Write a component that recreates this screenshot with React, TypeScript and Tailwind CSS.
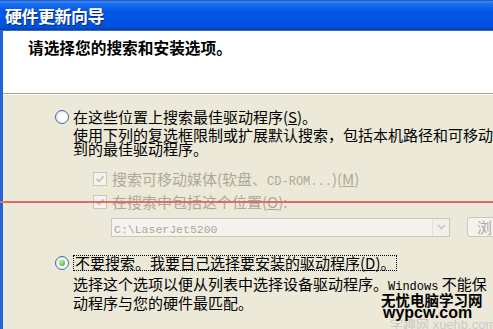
const CJK = '"Noto Sans CJK SC", "Liberation Sans", sans-serif';

function Lat({ children, size = 12 }: { children: React.ReactNode; size?: number }) {
  return (
    <span style={{ fontSize: size }} className="font-['Liberation_Mono',monospace]">
      {children}
    </span>
  );
}

function Radio({ checked }: { checked?: boolean }) {
  return (
    <span className="w-[14px] h-[14px] rounded-full border border-[#3e6aa5] bg-[radial-gradient(circle_at_60%_60%,#ffffff_30%,#dcdcd4_100%)] flex items-center justify-center shrink-0">
      {checked ? (
        <span className="w-[6px] h-[6px] rounded-full bg-[radial-gradient(circle_at_35%_35%,#b7f2a0,#31a628)]" />
      ) : null}
    </span>
  );
}

function Checkbox() {
  return (
    <span className="w-[14px] h-[14px] border border-[#c9c7ba] bg-[#f4f3ee] flex items-center justify-center shrink-0">
      <svg width="10" height="10" viewBox="0 0 10 10">
        <path d="M1.5 4.8 L4 7.3 L8.6 2.3" stroke="#c2c0b2" strokeWidth="1.8" fill="none" />
      </svg>
    </span>
  );
}

export default function App() {
  return (
    <div
      className="relative w-[493px] h-[329px] overflow-hidden bg-[#ece9d8] flex flex-col text-black"
      style={{ fontFamily: CJK }}
    >
      {/* Title bar */}
      <div className="h-[31px] shrink-0 flex items-center pl-[5px] bg-[linear-gradient(to_bottom,#0b2f86_0px,#3d8cf5_1px,#1a6cf0_4px,#0058e6_12px,#0054e3_22px,#004fd6_28px,#0a3a9a_30px,#6fa0e8_31px)]">
        <span className="text-white font-bold text-[17px] leading-none tracking-[-0.5px] [text-shadow:1px_1px_0_#0a2a70]">
          硬件更新向导
        </span>
      </div>

      <div className="flex flex-1">
        {/* left window frame */}
        <div className="w-[3px] bg-[#2462d8] shrink-0" />

        <div className="flex-1 flex flex-col">
          {/* Header */}
          <div className="h-[62px] bg-white pl-[25px] pt-[7px]">
            <h1 className="font-bold text-[15.7px] leading-[20px]">请选择您的搜索和安装选项。</h1>
          </div>
          <div className="h-px bg-[#aca899]" />
          <div className="h-px bg-white" />

          {/* Options */}
          <div className="flex-1 pl-[52px] pt-[13px] text-[15px]">
            <div className="flex items-center gap-[4px] h-[18px]">
              <Radio />
              <span className="leading-[18px] whitespace-nowrap">
                在这些位置上搜索最佳驱动程序(<span className="underline">S</span>)。
              </span>
            </div>
            <div className="ml-[18px] mt-[2px] leading-[14px] whitespace-nowrap">
              <div>使用下列的复选框限制或扩展默认搜索，包括本机路径和可移动</div>
              <div>到的最佳驱动程序。</div>
            </div>

            <div className="ml-[38px] mt-[14px] flex items-center gap-[5px] h-[18px] text-[#aca899] whitespace-nowrap">
              <Checkbox />
              <span>
                搜索可移动媒体(软盘、<Lat>CD-ROM...</Lat>)(<span className="underline">M</span>)
              </span>
            </div>
            <div className="ml-[38px] mt-[5px] flex items-center gap-[5px] h-[18px] text-[#aca899] whitespace-nowrap">
              <Checkbox />
              <span>
                在搜索中包括这个位置(<span className="underline">O</span>):
              </span>
            </div>

            <div className="ml-[56px] mt-[6px] flex items-center gap-[17px]">
              <div className="w-[339px] h-[19px] border border-[#c9c7ba] bg-[#f4f3ee] flex items-center pl-[2px]">
                <span className="flex-1 text-[#aca899] whitespace-nowrap">
                  <Lat size={11.5}>C:\LaserJet5200</Lat>
                </span>
                <span className="w-[17px] h-[17px] bg-[#f1f0ea] border-l border-[#e4e2d8] flex items-center justify-center">
                  <svg width="9" height="6" viewBox="0 0 9 6">
                    <path d="M1 1 L4.5 4.5 L8 1" stroke="#c9c7ba" strokeWidth="1.6" fill="none" />
                  </svg>
                </span>
              </div>
              <div className="w-[75px] h-[20px] shrink-0 rounded-[3px] border border-[#cac8bb] bg-[#f4f3ee] pl-[9px] text-[#aca899] leading-[18px] whitespace-nowrap">
                浏览(R)...
              </div>
            </div>

            <div className="mt-[17px] flex items-center gap-[4px] h-[18px]">
              <Radio checked />
              <span className="leading-[14px] border border-dotted border-black px-px whitespace-nowrap">
                不要搜索。我要自己选择要安装的驱动程序(<span className="underline">D</span>)。
              </span>
            </div>
            <div className="ml-[18px] mt-[4px] leading-[15px] whitespace-nowrap">
              <div>
                选择这个选项以便从列表中选择设备驱动程序。<Lat>Windows</Lat> 不能保
              </div>
              <div>动程序与您的硬件最匹配。</div>
            </div>
          </div>
        </div>
      </div>

      {/* red annotation line */}
      <div className="absolute left-0 right-0 top-[201px] h-[2px] bg-[#e26b68]" />

      {/* watermark */}
      <div className="absolute left-[390px] top-[317px] text-[13px] leading-[13px] text-[#cacaca] whitespace-nowrap font-['Liberation_Sans',sans-serif]">
        <span style={{ fontFamily: CJK }}>学趣网</span> xuehb.com
      </div>
      <div className="absolute left-[381px] top-[291px] text-[14.5px] leading-[17px] font-bold whitespace-nowrap">
        无忧电脑学习网
      </div>
      <div className="absolute left-[383px] top-[304px] text-[16px] leading-[18px] font-bold whitespace-nowrap font-['Liberation_Sans',sans-serif]">
        wypcw.com
      </div>
    </div>
  );
}
